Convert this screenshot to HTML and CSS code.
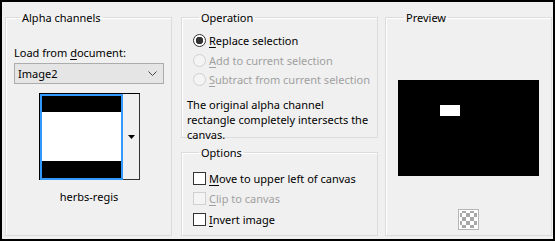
FILE: index.html
```html
<!DOCTYPE html>
<html lang="en">
<head>
    <meta charset="UTF-8">
    <meta name="viewport" content="width=device-width, initial-scale=1.0">
    <title>Load From Alpha Channel</title>
    <link rel="stylesheet" href="styles.css">
</head>
<body>

<div class="dialog">
    <fieldset class="group channels">
        <legend>Alpha channels</legend>
        <div class="field-label">Load from <u>d</u>ocument:</div>
        <div class="select">
            <span>Image2</span>
            <svg width="9" height="5" viewBox="0 0 9 5"><path d="M0.5 0.5 L4.5 4.5 L8.5 0.5" fill="none" stroke="#444" stroke-width="1"/></svg>
        </div>
        <div class="thumb-picker">
            <div class="thumb">
                <div class="thumb-image"></div>
            </div>
            <div class="thumb-btn">
                <svg width="7" height="4" viewBox="0 0 7 4"><path d="M0 0 H7 L3.5 4 Z" fill="#000"/></svg>
            </div>
        </div>
        <div class="thumb-name">herbs-regis</div>
    </fieldset>

    <div class="middle">
        <fieldset class="group operation">
            <legend>Operation</legend>
            <label class="choice"><input type="radio" name="op" checked> <span><u>R</u>eplace selection</span></label>
            <label class="choice disabled"><input type="radio" name="op" disabled> <span><u>A</u>dd to current selection</span></label>
            <label class="choice disabled"><input type="radio" name="op" disabled> <span><u>S</u>ubtract from current selection</span></label>
            <p class="note">The original alpha channel rectangle completely intersects the canvas.</p>
        </fieldset>

        <fieldset class="group options">
            <legend>Options</legend>
            <label class="choice"><input type="checkbox"> <span><u>M</u>ove to upper left of canvas</span></label>
            <label class="choice disabled"><input type="checkbox" disabled> <span><u>C</u>lip to canvas</span></label>
            <label class="choice"><input type="checkbox"> <span><u>I</u>nvert image</span></label>
        </fieldset>
    </div>

    <fieldset class="group preview">
        <legend>Preview</legend>
        <div class="preview-canvas">
            <div class="preview-sel"></div>
        </div>
        <div class="checker"></div>
    </fieldset>
</div>

</body>
</html>
```

FILE: styles.css
```css
body {
    margin: 0;
    font-family: "Noto Sans", "Open Sans", sans-serif;
    font-size: 11px;
    line-height: 15px;
    color: #000;
}
u {
    text-decoration-thickness: 1px;
    text-underline-offset: 2px;
}
.dialog {
    box-sizing: border-box;
    width: 555px;
    height: 241px;
    border: 2px solid #000;
    background: #f0f0f0;
    padding: 8px 1px 3px 3px;
    display: flex;
}
.group {
    margin: 0;
    padding: 0;
    min-width: 0;
    border: 1px solid #dcdcdc;
    box-shadow: inset 1px 1px 0 #fff;
}
.group legend {
    margin-left: 6px;
    padding: 0 2px;
    line-height: 15px;
}

/* left column */
.channels {
    width: 167px;
    box-sizing: border-box;
    margin-right: 9px;
    padding: 20px 0 0 8px;
}
.select {
    box-sizing: border-box;
    width: 150px;
    height: 21px;
    margin-top: 3px;
    border: 1px solid #acacac;
    background: #e5e5e5;
    display: flex;
    align-items: center;
    justify-content: space-between;
    padding: 0 6px 0 3px;
}
.thumb-picker {
    display: flex;
    width: 101px;
    height: 87px;
    margin: 9px 0 0 25px;
    box-sizing: border-box;
    border-top: 1px solid #000;
    border-left: 1px solid #000;
}
.thumb {
    box-sizing: border-box;
    width: 83px;
    height: 100%;
    border: 2px solid #3399ff;
    padding: 1px 0;
    background: #000;
}
.thumb-image {
    height: 100%;
    background: linear-gradient(#000 0 15px, #fff 15px 64px, #000 64px);
}
.thumb-btn {
    flex: 1;
    display: flex;
    align-items: center;
    justify-content: center;
    border-right: 1px solid #333;
    border-bottom: 1px solid #333;
    background: #f0f0f0;
}
.thumb-name {
    margin-top: 9px;
    width: 150px;
    text-align: center;
}

/* middle column */
.middle {
    width: 197px;
    margin-right: 7px;
    display: flex;
    flex-direction: column;
    gap: 7px;
}
.operation {
    padding: 6px 4px 0 11px;
    height: 128px;
    box-sizing: border-box;
}
.options {
    flex: 1;
    padding: 8px 4px 0 11px;
}
.choice {
    display: flex;
    align-items: center;
    gap: 3px;
    height: 19.5px;
}
.options .choice {
    height: 20.5px;
}
.choice input {
    appearance: none;
    margin: 0;
    width: 13px;
    height: 13px;
    border: 1px solid #333;
    background: #fff;
    box-sizing: border-box;
}
.choice input[type="radio"] {
    border-radius: 50%;
}
.choice input[type="radio"]:checked {
    background: radial-gradient(circle, #333 0 3.5px, #fff 4px);
}
.choice.disabled {
    color: #a0a0a0;
}
.choice.disabled input {
    border-color: #d0d0d0;
    background: #f4f4f4;
}
.note {
    margin: 7px 0 0 -6px;
    line-height: 15px;
}

/* right column */
.preview {
    width: 167px;
    box-sizing: border-box;
    padding: 0 0 0 12px;
    display: flex;
    flex-direction: column;
}
.preview-canvas {
    width: 141px;
    height: 96px;
    margin-top: 55px;
    background: #000;
    padding: 25px 0 0 42px;
    box-sizing: border-box;
}
.preview-sel {
    width: 20px;
    height: 11px;
    background: #fff;
}
.checker {
    width: 21px;
    height: 21px;
    box-sizing: border-box;
    margin: 33px 0 0 60px;
    border: 1px solid #b4b4b4;
    padding: 1px;
    background: repeating-conic-gradient(#a8a8a8 0 25%, #fff 0 50%) 2px 2px / 8px 8px content-box, #fff;
}
```
